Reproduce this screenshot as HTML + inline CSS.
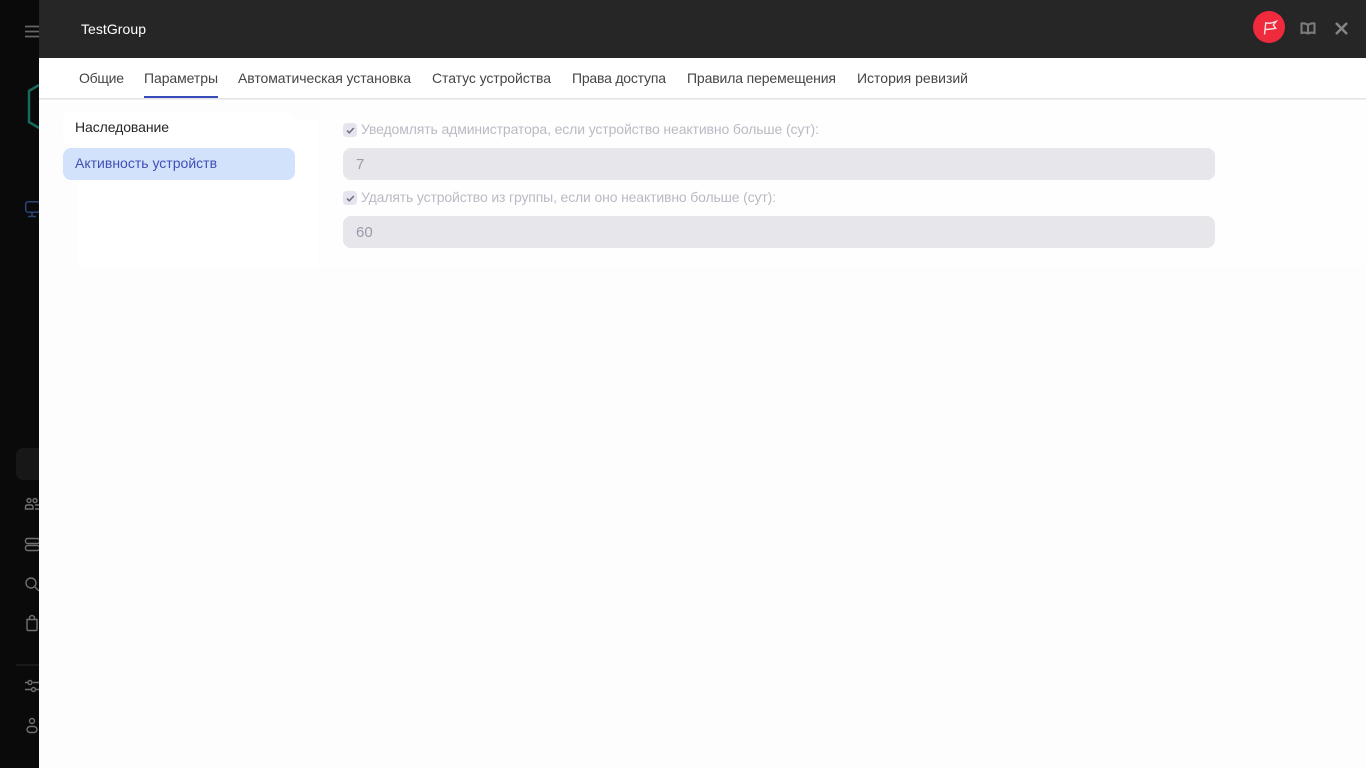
<!DOCTYPE html>
<html><head><meta charset="utf-8"><style>
html,body{margin:0;padding:0;width:1366px;height:768px;overflow:hidden;background:#0a0a0a}
svg{display:block;position:absolute;left:0;top:0}
text{font-family:"Liberation Sans","DejaVu Sans",sans-serif;font-size:14px}
</style></head><body>
<svg width="1366" height="768" viewBox="0 0 1366 768" xmlns="http://www.w3.org/2000/svg">
<rect width="1366" height="768" fill="#0a0a0a"/>
<!-- sidebar -->
<path d="M25 26.500H39M25 31.500H39M25 36.500H39" fill="none" stroke="#666" stroke-width="1.700"/>
<path d="M39 85L29 91V122L39 128" fill="none" stroke="#176b5c" stroke-width="2.500"/>
<g fill="none" stroke="#2f4478" stroke-width="1.500">
<rect x="25.700" y="201.700" rx="2.500" width="14" height="10.500"/>
<path d="M32 212V216M28 216.500H36"/>
</g>
<rect x="16" y="448" width="30" height="32" rx="7" fill="#171717"/>
<g fill="none" stroke="#707070" stroke-width="1.400">
<circle cx="29" cy="500.500" r="2"/><circle cx="35" cy="500.500" r="2"/>
<path d="M25.500 509V507Q25.500 505 27.500 505H31Q33 505 33 507V509ZM35 505H39M35 509H39"/>
<rect x="25.500" y="538.500" width="14" height="5" rx="2"/><rect x="25.500" y="545.500" width="14" height="5" rx="2"/>
<circle cx="31" cy="583" r="5"/><path d="M35 587L39 591"/>
<path d="M27 619.500H37V629Q37 630.500 36 630.500H28Q27 630.500 27 629V619.500ZM29.500 619.500V617Q32 614 34.500 617V619.500"/>
<path d="M25 682.500H28M33 682.500H39M25 689.500H31M36 689.500H39"/>
<circle cx="30" cy="682.500" r="2"/><circle cx="33.500" cy="689.500" r="2"/>
<circle cx="32" cy="721" r="2.500"/><rect x="27" y="726.500" width="10" height="6" rx="3"/>
</g>
<path d="M16 665H39" stroke="#1e1e1e" stroke-width="1.500"/>
<!-- main panel -->
<rect x="39" y="58" width="1327" height="710" fill="#fdfdfd"/>
<rect x="39" y="0" width="1327" height="58" fill="#262626"/>
<rect x="39" y="58" width="1327" height="40" fill="#ffffff"/>
<rect x="39" y="98" width="1327" height="1.500" fill="#e4e4e6"/>
<rect x="78" y="120" width="240" height="147" fill="#ffffff"/>
<rect x="320" y="100" width="1046" height="167" fill="#fefefe"/>
<rect x="63" y="112" width="232" height="32" rx="8" fill="#ffffff"/>
<rect x="63" y="148" width="232" height="32" rx="8" fill="#d3e2fb"/>
<text x="81" y="34" fill="#ffffff" textLength="65" lengthAdjust="spacing">TestGroup</text>
<!-- header icons -->
<circle cx="1269" cy="27" r="16" fill="#ee2a3c"/>
<path d="M1264.500 34.500L1265.800 22.800Q1270 24 1276 21.500L1273.300 25L1275.600 28.300Q1270 29.300 1265.200 29.500" fill="none" stroke="#f8e3e5" stroke-width="1.400"/>
<path d="M1308 25Q1305 22.800 1301.500 23.500V33Q1305 32 1308 33.500Q1311 32 1314.500 33V23.500Q1311 22.800 1308 25ZM1308 25V33" fill="none" stroke="#7b7b7b" stroke-width="2.100"/>
<path d="M1336 23L1347 34M1347 23L1336 34" stroke="#858585" stroke-width="2.600" fill="none"/>
<!-- tabs -->
<g fill="#454548">
<text x="79" y="83" textLength="45" lengthAdjust="spacing">Общие</text>
<text x="144" y="83" textLength="74" lengthAdjust="spacing">Параметры</text>
<text x="238" y="83" textLength="173" lengthAdjust="spacing">Автоматическая установка</text>
<text x="432" y="83" textLength="119" lengthAdjust="spacing">Статус устройства</text>
<text x="572" y="83" textLength="94" lengthAdjust="spacing">Права доступа</text>
<text x="687" y="83" textLength="149" lengthAdjust="spacing">Правила перемещения</text>
<text x="857" y="83" textLength="111" lengthAdjust="spacing">История ревизий</text>
</g>
<rect x="144" y="96" width="74" height="2" fill="#3a4cba"/>
<!-- left menu -->
<text x="75" y="132" fill="#26262a" textLength="94" lengthAdjust="spacing">Наследование</text>
<text x="75" y="168" fill="#3f4fb5" textLength="142" lengthAdjust="spacing">Активность устройств</text>
<!-- form -->
<rect x="343" y="123" width="14" height="14" rx="3.500" fill="#e5e4ef"/>
<path d="M347 130.500L349.300 132.800L353.800 128" fill="none" stroke="#6d6d7c" stroke-width="1.500"/>
<text x="361" y="134" fill="#b9bac4" textLength="458" lengthAdjust="spacing">Уведомлять администратора, если устройство неактивно больше (сут):</text>
<rect x="343" y="148" width="872" height="32" rx="8" fill="#e6e6eb"/>
<text x="356" y="169" fill="#9a9ba8" style="font-size:15px">7</text>
<rect x="343" y="191" width="14" height="14" rx="3.500" fill="#e5e4ef"/>
<path d="M347 198.500L349.300 200.800L353.800 196" fill="none" stroke="#6d6d7c" stroke-width="1.500"/>
<text x="361" y="202" fill="#b9bac4" textLength="415" lengthAdjust="spacing">Удалять устройство из группы, если оно неактивно больше (сут):</text>
<rect x="343" y="216" width="872" height="32" rx="8" fill="#e6e6eb"/>
<text x="356" y="237" fill="#9a9ba8" style="font-size:15px">60</text>
</svg>
</body></html>
